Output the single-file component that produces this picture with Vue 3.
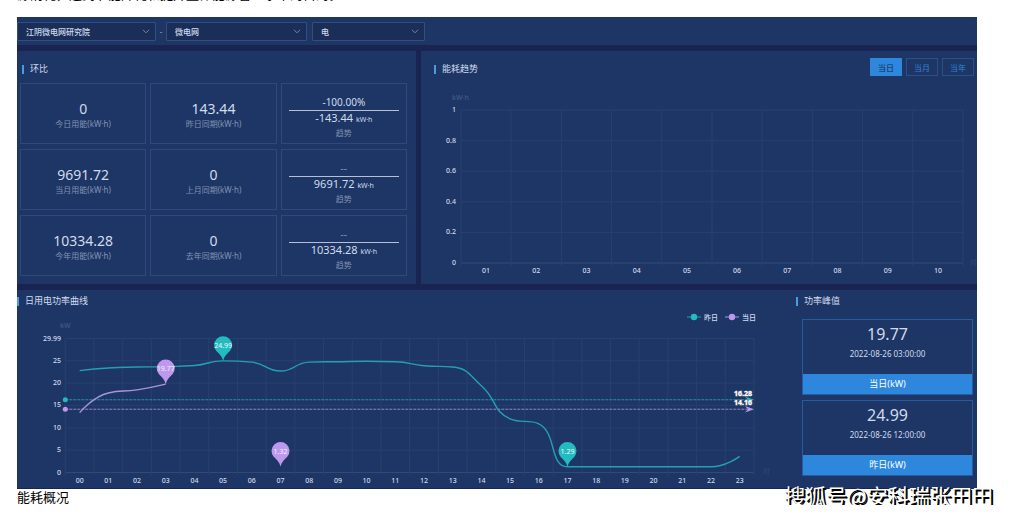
<script setup>
import { ref } from 'vue'

const site = ref('江阴微电网研究院')
const area = ref('微电网')
const energy = ref('电')
const period = ref('当日')
const periods = ['当日', '当月', '当年']

const rows = [
  { now: '0', nowLabel: '今日用能(kW·h)', prev: '143.44', prevLabel: '昨日同期(kW·h)', rate: '-100.00%', diff: '-143.44' },
  { now: '9691.72', nowLabel: '当月用能(kW·h)', prev: '0', prevLabel: '上月同期(kW·h)', rate: '--', diff: '9691.72' },
  { now: '10334.28', nowLabel: '今年用能(kW·h)', prev: '0', prevLabel: '去年同期(kW·h)', rate: '--', diff: '10334.28' },
]

const peaks = [
  { value: '19.77', time: '2022-08-26 03:00:00', label: '当日(kW)' },
  { value: '24.99', time: '2022-08-26 12:00:00', label: '昨日(kW)' },
]

const pad = (n) => String(n).padStart(2, '0')

// Trend chart
const trend = { left: 40, right: 542, top: 25, bottom: 178 }
const trendStep = (trend.right - trend.left) / 10
const trendY = (v) => trend.bottom - v * (trend.bottom - trend.top)
const trendTicks = [0, 0.2, 0.4, 0.6, 0.8, 1]

// Power curve chart
const power = { left: 48.3, right: 737, top: 27.5, bottom: 161.5 }
const powerStep = (power.right - power.left) / 24
const powerX = (i) => power.left + powerStep * (i + 0.5)
const powerY = (v) => power.bottom - (v / 29.99) * (power.bottom - power.top)
const powerTicks = [0, 5, 10, 15, 20, 25, 29.99]

const yesterday = [22.8, 23.4, 23.6, 23.7, 23.95, 24.99, 24.7, 22.7, 24.7, 24.8, 24.9, 24.8, 23.9, 23.6, 19.4, 12, 10.9, 1.29, 1.29, 1.29, 1.29, 1.29, 1.29, 3.6]
const today = [13.4, 17.8, 18.5, 19.77]

const within = (v, a, b) => Math.max(Math.min(v, Math.max(a, b)), Math.min(a, b))

// Smooth line whose control points never leave the range of their neighbours
function smoothPath(values) {
  const pts = values.map((v, i) => [powerX(i), powerY(v)])
  let d = `M${pts[0][0]} ${pts[0][1]}`
  let out = pts[0]
  for (let i = 1; i < pts.length; i++) {
    const p = pts[i - 1]
    const c = pts[i]
    const n = pts[i + 1]
    let into = c
    let next = c
    if (n) {
      const lenPrev = Math.hypot(c[0] - p[0], c[1] - p[1])
      const lenNext = Math.hypot(n[0] - c[0], n[1] - c[1])
      const ratio = lenNext / (lenNext + lenPrev)
      const fwd = [0, 1].map((k) => within(c[k] + (n[k] - p[k]) * 0.5 * ratio, c[k], n[k]))
      into = [0, 1].map((k) => within(c[k] - ((fwd[k] - c[k]) * lenPrev) / lenNext, c[k], p[k]))
      next = [0, 1].map((k) => c[k] + ((c[k] - into[k]) * lenNext) / lenPrev)
    }
    d += ` C${out[0]} ${out[1]} ${into[0]} ${into[1]} ${c[0]} ${c[1]}`
    out = next
  }
  return d
}

const pins = [
  { i: 5, v: 24.99, text: '24.99', tone: 'teal' },
  { i: 3, v: 19.77, text: '19.77', tone: 'violet' },
  { i: 7, v: 1.32, text: '1.32', tone: 'violet' },
  { i: 17, v: 1.29, text: '1.29', tone: 'teal' },
]
const averages = [
  { v: 16.28, text: '16.28', tone: 'teal' },
  { v: 14.16, text: '14.16', tone: 'violet' },
]
const legend = [
  { x: 677, text: '昨日', tone: 'teal' },
  { x: 715, text: '当日', tone: 'violet' },
]
</script>

<template>
  <main class="page">
    <div class="lead"><p>源消耗，达到节能降耗和提升整体能源管理水平的目的。</p></div>

    <section class="board">
      <div class="filters">
        <span class="pick pick-site">
          <select v-model="site" aria-label="站点"><option>江阴微电网研究院</option></select>
          <svg class="chev" viewBox="0 0 8 5"><path d="M1 .8 4 3.8 7 .8" /></svg>
        </span>
        <span class="dash">-</span>
        <span class="pick pick-area">
          <select v-model="area" aria-label="区域"><option>微电网</option></select>
          <svg class="chev" viewBox="0 0 8 5"><path d="M1 .8 4 3.8 7 .8" /></svg>
        </span>
        <span class="pick pick-energy">
          <select v-model="energy" aria-label="能源"><option>电</option></select>
          <svg class="chev" viewBox="0 0 8 5"><path d="M1 .8 4 3.8 7 .8" /></svg>
        </span>
      </div>

      <div class="upper">
        <section class="panel compare">
          <h2 class="title">环比</h2>
          <div class="cells">
            <template v-for="r in rows" :key="r.nowLabel">
              <div class="cell">
                <strong>{{ r.now }}</strong>
                <span>{{ r.nowLabel }}</span>
              </div>
              <div class="cell">
                <strong>{{ r.prev }}</strong>
                <span>{{ r.prevLabel }}</span>
              </div>
              <div class="cell change">
                <b :class="{ none: r.rate === '--' }">{{ r.rate }}</b>
                <em>{{ r.diff }} <small>kW·h</small></em>
                <span>趋势</span>
              </div>
            </template>
          </div>
        </section>

        <section class="panel">
          <header class="trend-head">
            <h2 class="title">能耗趋势</h2>
            <div class="tabs">
              <button v-for="p in periods" :key="p" type="button" :class="{ on: p === period }" @click="period = p">{{ p }}</button>
            </div>
          </header>
          <svg class="chart" viewBox="0 0 556 199">
            <text class="unit" x="31" y="15">kW·h</text>
            <text class="unit faint" x="549" y="180">时</text>
            <g v-for="t in trendTicks" :key="t">
              <line :class="t ? 'grid' : 'axis'" :x1="trend.left" :x2="trend.right" :y1="trendY(t)" :y2="trendY(t)" />
              <text class="tick end" x="35" :y="trendY(t) + 2">{{ t }}</text>
            </g>
            <line v-for="n in 11" :key="n" class="grid" :x1="trend.left + (n - 1) * trendStep" :x2="trend.left + (n - 1) * trendStep" :y1="trend.top" :y2="trend.bottom + 3" />
            <text v-for="n in 10" :key="n" class="tick mid" :x="trend.left + (n - 0.5) * trendStep" y="188">{{ pad(n) }}</text>
          </svg>
        </section>
      </div>

      <div class="panel lower">
        <section class="curve">
          <h2 class="title">日用电功率曲线</h2>
          <svg class="chart" viewBox="0 0 770 177">
            <text class="unit" x="43" y="17">kW</text>
            <text class="unit faint" x="746" y="163">时</text>
            <g v-for="t in powerTicks" :key="t">
              <line :class="t ? 'grid' : 'axis'" :x1="power.left" :x2="power.right" :y1="powerY(t)" :y2="powerY(t)" />
              <text class="tick end" x="44" :y="powerY(t) + 2">{{ t }}</text>
            </g>
            <line v-for="n in 25" :key="n" class="grid" :x1="power.left + (n - 1) * powerStep" :x2="power.left + (n - 1) * powerStep" :y1="power.top" :y2="power.bottom + 3" />
            <text v-for="n in 24" :key="n" class="tick mid" :x="powerX(n - 1)" y="172">{{ pad(n - 1) }}</text>

            <g v-for="l in legend" :key="l.text" :class="l.tone">
              <line class="stroke" :x1="l.x - 7" :x2="l.x + 7" y1="6" y2="6" />
              <circle class="fill" :cx="l.x" cy="6" r="3.2" />
              <text class="tick" :x="l.x + 10" y="8.5">{{ l.text }}</text>
            </g>

            <g v-for="a in averages" :key="a.text" :class="a.tone">
              <line class="stroke avg" :x1="power.left" :x2="power.right - 4" :y1="powerY(a.v)" :y2="powerY(a.v)" />
              <circle class="fill" :cx="power.left" :cy="powerY(a.v)" r="2.5" />
              <path class="fill" :transform="`translate(${power.right} ${powerY(a.v)})`" d="M0 0 -9 -3.2 -6 0 -9 3.2Z" />
            </g>
            <text v-for="a in averages" :key="a.v" class="avg-text" x="735" :y="powerY(a.v) - 4">{{ a.text }}</text>

            <path class="curve-line teal stroke" :d="smoothPath(yesterday)" />
            <path class="curve-line violet stroke" :d="smoothPath(today)" />

            <g v-for="p in pins" :key="p.text" :class="p.tone" :transform="`translate(${powerX(p.i)} ${powerY(p.v)})`">
              <path class="fill" d="M0 0C-1 -4.500 -4 -7 -6.800 -9.800A9 9 0 1 1 6.800 -9.800C4 -7 1 -4.500 0 0Z" />
              <text class="pin-text" x="0" y="-13">{{ p.text }}</text>
            </g>
          </svg>
        </section>

        <section class="peak">
          <h2 class="title">功率峰值</h2>
          <div v-for="p in peaks" :key="p.label" class="card">
            <strong>{{ p.value }}</strong>
            <time>{{ p.time }}</time>
            <span>{{ p.label }}</span>
          </div>
        </section>
      </div>
    </section>

    <p class="caption">能耗概况</p>
    <div class="mark">搜狐号@安科瑞张田田</div>
  </main>
</template>

<style>
body {
  background: #fff;
}
</style>

<style scoped>
.page {
  position: relative;
  padding: 0 38px 0 17px;
  font-family: "Noto Sans", "Noto Sans CJK SC", sans-serif;
  color: #d0dbee;
}
.page * {
  box-sizing: border-box;
}
p,
h2 {
  margin: 0;
}
.lead {
  display: flex;
  align-items: flex-end;
  height: 17px;
  padding-bottom: 14px;
  overflow: hidden;
}
.lead p,
.caption {
  font-family: "Noto Sans CJK SC", sans-serif;
  font-size: 13px;
  line-height: 18px;
  color: #000;
}
.caption {
  line-height: 16px;
}
.board {
  display: flex;
  flex-direction: column;
  gap: 6px;
  padding-bottom: 1px;
  background: #1a2453;
}
.filters {
  display: flex;
  align-items: center;
  height: 28px;
  background: #1e3665;
}
.pick {
  position: relative;
  height: 19px;
}
.pick-site {
  width: 139px;
}
.pick-area {
  width: 141px;
  margin-right: 5px;
}
.pick-energy {
  width: 113px;
}
.pick select {
  display: block;
  appearance: none;
  width: 100%;
  height: 19px;
  padding: 0 8px;
  border: 1px solid #31507f;
  border-radius: 1px;
  background: #1a2e57;
  color: #d0dbee;
  font: 500 8px "Noto Sans", "Noto Sans CJK SC", sans-serif;
}
.chev {
  position: absolute;
  top: 7px;
  right: 6px;
  width: 8px;
  height: 5px;
  fill: none;
  stroke: #7187ad;
  pointer-events: none;
}
.dash {
  width: 10px;
  font-size: 8px;
  text-align: center;
  color: #8fa3c6;
}
.upper {
  display: grid;
  grid-template-columns: 399fr 556fr;
  gap: 5px;
}
.panel {
  background: #1e3665;
}
.title {
  display: flex;
  align-items: center;
  gap: 6px;
  font-size: 9px;
  font-weight: 400;
  line-height: 12px;
}
.title::before {
  content: "";
  width: 2px;
  height: 9px;
  background: #4a9be0;
}
.compare {
  padding: 12px 9px 8px 3px;
}
.compare .title {
  padding-left: 2px;
  margin-bottom: 8px;
}
.cells {
  display: grid;
  grid-template-columns: repeat(3, 1fr);
  gap: 5px 4px;
}
.cell {
  display: flex;
  flex-direction: column;
  align-items: center;
  justify-content: center;
  height: 61px;
  padding-top: 3px;
  border: 1px solid #2d4a7b;
}
.cell strong {
  font-size: 14px;
  font-weight: 400;
  line-height: 18px;
}
.cell span {
  font-size: 8px;
  line-height: 12px;
  color: #8193b4;
}
.change {
  padding: 6px 7px 0;
}
.change b {
  align-self: stretch;
  border-bottom: 1px solid #b4c0d6;
  font-size: 10px;
  font-weight: 400;
  line-height: 15px;
  text-align: center;
}
.change b.none {
  color: #8193b4;
}
.change em {
  font-size: 11px;
  font-style: normal;
  line-height: 14px;
}
.change small {
  font-size: 7px;
}
.trend-head {
  display: flex;
  justify-content: space-between;
  height: 34px;
  padding: 7px 3px 0 13px;
}
.trend-head .title {
  height: 22px;
}
.tabs {
  display: flex;
  gap: 4px;
}
.tabs button {
  width: 32px;
  height: 18px;
  padding: 0;
  border: 1px solid #2b4f86;
  background: transparent;
  color: #2d84d6;
  font: 8px "Noto Sans CJK SC", sans-serif;
}
.tabs button.on {
  border-color: #2d88dd;
  background: #2d88dd;
  color: #14294f;
}
.chart {
  display: block;
  width: 100%;
  height: auto;
}
.grid,
.axis {
  stroke: #27406d;
  stroke-width: 1;
}
.axis {
  stroke: #304a78;
}
.tick,
.unit {
  font-size: 7px;
  font-weight: 500;
  fill: #d0dbee;
}
.unit {
  fill: #455b84;
}
.faint {
  fill: #2c4472;
}
.end {
  text-anchor: end;
}
.mid {
  text-anchor: middle;
}
.teal {
  --tone: #22bcc0;
  --line: #259fb2;
}
.violet {
  --tone: #bd98ec;
  --line: #a795dc;
}
.fill {
  fill: var(--tone);
}
.stroke {
  fill: none;
  stroke: var(--line);
  stroke-width: 1;
}
.avg {
  stroke-dasharray: 3 1;
  opacity: 0.85;
}
.curve-line {
  stroke-width: 1.4;
}
.pin-text {
  font-size: 7px;
  fill: #f0f4fb;
  text-anchor: middle;
}
.avg-text {
  font-size: 7px;
  font-weight: 700;
  fill: #fff;
  stroke: #8b8f9c;
  stroke-width: 1;
  paint-order: stroke;
  text-anchor: end;
}
.lower {
  display: grid;
  grid-template-columns: 770fr 190fr;
}
.curve {
  padding-top: 5px;
}
.curve .title {
  margin-bottom: 4px;
}
.peak {
  display: flex;
  flex-direction: column;
  gap: 5px;
  padding: 5px 4px 0 15px;
}
.peak .title {
  margin: 0 0 7px -6px;
}
.card {
  display: flex;
  flex-direction: column;
  align-items: center;
  border: 1px solid #245c9f;
}
.card strong {
  padding-top: 4px;
  font-size: 16px;
  font-weight: 400;
  line-height: 20px;
}
.card time {
  padding: 4px 0 14px;
  font-size: 8px;
  line-height: 12px;
}
.card span {
  align-self: stretch;
  background: #2d88dd;
  font-size: 9px;
  line-height: 20px;
  text-align: center;
  color: #fff;
}
.mark {
  position: absolute;
  top: 481px;
  right: 22px;
  font-family: "Noto Sans CJK SC", sans-serif;
  font-size: 21px;
  font-weight: 400;
  line-height: 29px;
  color: #fff;
  text-shadow: 1px 1px 0 #000, 2px 2px 0 #000;
  white-space: nowrap;
}
</style>
